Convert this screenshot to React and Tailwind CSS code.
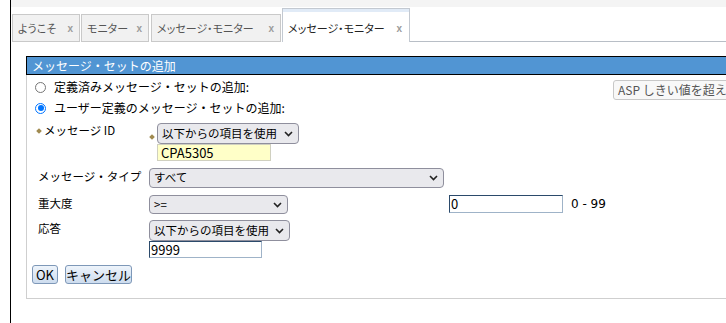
import React from "react";

const tabs = [
  { label: "ようこそ", w: "w-[68px]", mr: "mr-px" },
  { label: "モニター", w: "w-[68px]", mr: "mr-[2px]" },
  { label: "メッセージ・モニター", w: "w-[130px]", mr: "mr-px" },
];

function Chevron() {
  return (
    <svg width="9" height="6" viewBox="0 0 9 6" className="shrink-0">
      <path d="M1 1 L4.5 4.5 L8 1" fill="none" stroke="#222" strokeWidth="1.6" />
    </svg>
  );
}

function Select({ value, w, h }) {
  return (
    <div
      className={`${w} ${h} flex items-center justify-between pl-[4px] pr-[5px] bg-[#e9e9ed] border border-[#8f8f9d] rounded-[4px] text-[11.5px] leading-none`}
    >
      <span>{value}</span>
      <Chevron />
    </div>
  );
}

function Diamond() {
  return <span className="inline-block w-[4px] h-[4px] rotate-45 bg-[#a08a50]" />;
}

function Radio({ checked }) {
  return checked ? (
    <span className="w-[11px] h-[11px] rounded-full border border-[#0075ff] flex items-center justify-center">
      <span className="w-[6px] h-[6px] rounded-full bg-[#0075ff]" />
    </span>
  ) : (
    <span className="w-[11px] h-[11px] rounded-full border border-[#767676] bg-white" />
  );
}

export default function App() {
  return (
    <div className="w-[726px] h-[323px] overflow-hidden bg-white text-black text-[12px] font-['Noto_Sans_CJK_JP',sans-serif]">
      <div className="ml-[10px] h-full border-l border-black flex flex-col">
        {/* top strip */}
        <div className="h-[7px] bg-[#f4f4f4] shrink-0" />

        {/* tabs */}
        <div className="flex items-end h-[35px] pt-px pl-px shrink-0">
          {tabs.map((t) => (
            <div
              key={t.label}
              className={`${t.w} ${t.mr} h-[28px] border border-[#c9c9c9] bg-[#f1f1f1] flex items-center justify-between pl-[5px] pr-[6px] text-[#555] text-[11px] [font-feature-settings:'palt']`}
            >
              <span>{t.label}</span>
              <span className="font-['Liberation_Sans',sans-serif] font-bold text-[10px] text-[#9b9b9b]">x</span>
            </div>
          ))}
          <div className="w-[128px] h-[34px] border border-b-0 border-[#c3c9d1] bg-white flex flex-col">
            <div className="h-[3px] bg-[#e1ebf7]" />
            <div className="flex-1 flex items-center justify-between pl-[5px] pr-[7px] pt-[3px] text-[#222] text-[11px] [font-feature-settings:'palt']">
              <span>メッセージ・モニター</span>
              <span className="font-['Liberation_Sans',sans-serif] font-bold text-[10px] text-[#9b9b9b]">x</span>
            </div>
          </div>
          <div className="flex-1 h-full border-b border-[#b8bec6]" />
        </div>

        {/* panel */}
        <div className="mt-[14px] ml-[15px] w-[760px] shrink-0">
          <div className="h-[19px] border border-black bg-[#5195d3] text-white text-[12px] leading-[17px] pl-[5px]">
            メッセージ・セットの追加
          </div>
          <div className="border-l border-b border-[#cfcfcf] pt-[2px] pb-[14px]">
            {/* radio 1 */}
            <div className="flex items-start h-[20px]">
              <div className="w-[586px] shrink-0 h-[20px] flex items-center pl-[8px] gap-[8px]">
                <Radio />
                <span>定義済みメッセージ・セットの追加:</span>
              </div>
              <div className="shrink-0 mt-[3px] h-[20px] px-[4px] flex items-center border border-[#c8c8c8] rounded-[3px] bg-[#f8f8f8] text-[#555] whitespace-nowrap">
                ASP しきい値を超えたメッセージ
              </div>
            </div>
            {/* radio 2 */}
            <div className="mt-px h-[20px] flex items-center pl-[8px] gap-[8px]">
              <Radio checked />
              <span>ユーザー定義のメッセージ・セットの追加:</span>
            </div>

            {/* message id */}
            <div className="mt-[5px] flex items-start">
              <div className="w-[122px] pl-[10px] flex items-center gap-[3px] leading-[15px] text-[11.5px]">
                <Diamond />
                <span>メッセージ ID</span>
              </div>
              <div className="flex flex-col">
                <div className="flex items-center gap-[3px] ml-[1px]">
                  <span className="mt-[1px]">
                    <Diamond />
                  </span>
                  <Select value="以下からの項目を使用" w="w-[142px]" h="h-[21px]" />
                </div>
                <div className="ml-[8px] w-[114px] h-[17px] bg-[#ffffc8] border border-[#d0d0c0] pl-[3px] leading-[15px] text-[13px]">
                  CPA5305
                </div>
              </div>
            </div>

            {/* message type */}
            <div className="mt-[7px] flex items-start">
              <div className="w-[122px] pl-[11px] leading-[17px] text-[11.5px]">メッセージ・タイプ</div>
              <Select value="すべて" w="w-[295px]" h="h-[20px]" />
            </div>

            {/* severity */}
            <div className="mt-[7px] flex items-start">
              <div className="w-[122px] pl-[11px] leading-[17px] text-[11.5px]">重大度</div>
              <Select value=">=" w="w-[139px]" h="h-[19px]" />
              <div className="ml-[161px] w-[114px] h-[18px] border border-[#9fb3c8] border-t-[#2b4a6b] border-l-[#2b4a6b] pl-px leading-[16px] text-[13px]">
                0
              </div>
              <span className="ml-[8px] leading-[18px] font-['DejaVu_Sans',sans-serif]">0 - 99</span>
            </div>

            {/* response */}
            <div className="mt-[6px] flex items-start">
              <div className="w-[122px] pl-[11px] leading-[17px] text-[11.5px]">応答</div>
              <div className="flex flex-col">
                <Select value="以下からの項目を使用" w="w-[141px]" h="h-[21px]" />
                <div className="w-[113px] h-[17px] border border-[#9fb3c8] border-t-[#2b4a6b] border-l-[#2b4a6b] pl-px leading-[15px] text-[13px]">
                  9999
                </div>
              </div>
            </div>

            {/* buttons */}
            <div className="mt-[7px] pl-[5px] flex gap-[7px]">
              <button className="w-[26px] h-[19px] border border-[#7e98b8] rounded-[3px] bg-linear-to-b from-[#eef4fb] to-[#cddcee] text-[13px] leading-none">
                OK
              </button>
              <button className="w-[67px] h-[19px] border border-[#7e98b8] rounded-[3px] bg-linear-to-b from-[#eef4fb] to-[#cddcee] text-[13px] leading-none">
                キャンセル
              </button>
            </div>
          </div>
        </div>
      </div>
    </div>
  );
}
